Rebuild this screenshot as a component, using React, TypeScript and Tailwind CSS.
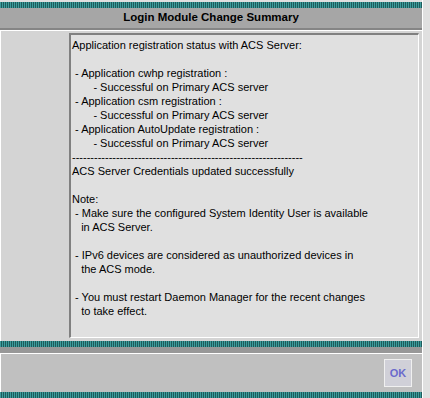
import React from "react";

const stripe =
  "bg-[repeating-linear-gradient(90deg,#3d9c9c_0px,#3d9c9c_1px,#1d5c5c_1px,#1d5c5c_2px)]";

const lines = [
  "Application registration status with ACS Server:",
  "",
  " - Application cwhp registration :",
  "       - Successful on Primary ACS server",
  " - Application csm registration :",
  "       - Successful on Primary ACS server",
  " - Application AutoUpdate registration :",
  "       - Successful on Primary ACS server",
  "---------------------------------------------------------------",
  "ACS Server Credentials updated successfully",
  "",
  "Note:",
  " - Make sure the configured System Identity User is available",
  "   in ACS Server.",
  "",
  " - IPv6 devices are considered as unauthorized devices in",
  "   the ACS mode.",
  "",
  " - You must restart Daemon Manager for the recent changes",
  "   to take effect.",
];

export default function App() {
  return (
    <div className="w-[430px] h-[398px] bg-[#e0e0e0] flex overflow-hidden font-['Liberation_Sans',Arial,sans-serif]">
      <div className="w-[422px] flex flex-col pt-[2px]">
        <div className={`h-[6px] ${stripe}`} />
        <div className="h-[20px] bg-[#a6a6a6] flex items-center justify-center text-[11.5px] font-bold text-black">
          Login Module Change Summary
        </div>
        <div className="h-[2px] bg-[#858585]" />
        <div className="h-[1px] bg-white" />
        <div className="flex-1 bg-[#d4d4d4] flex pl-[68px] pt-[2px] pb-[3px] border-l border-white">
          <div className="flex-1 bg-[#e0e0e0] border-t-2 border-l-2 border-t-[#808080] border-l-[#808080] border-r border-b border-r-white border-b-white pl-[1px] pt-[3px] text-[11px] leading-[14px] text-black whitespace-pre">
            {lines.map((l, i) => (
              <div key={i} className="h-[14px]">{l}</div>
            ))}
          </div>
          <div className="w-[3px]" />
        </div>
        <div className={`h-[6px] ${stripe}`} />
        <div className="h-[6px] bg-[#989898]" />
        <div className="h-[1px] bg-white" />
        <div className="h-[38px] bg-[#c0c0c0] flex items-center justify-end pr-[10px] border-l border-white">
          <div className="w-[28px] h-[28px] border border-[#f0f0f0] bg-[#d0d0d8] flex items-center justify-center text-[11px] font-bold text-[#6a6acc]">
            OK
          </div>
        </div>
        <div className={`h-[6px] ${stripe}`} />
      </div>
      <div className="w-[8px] border-l border-white" />
    </div>
  );
}
